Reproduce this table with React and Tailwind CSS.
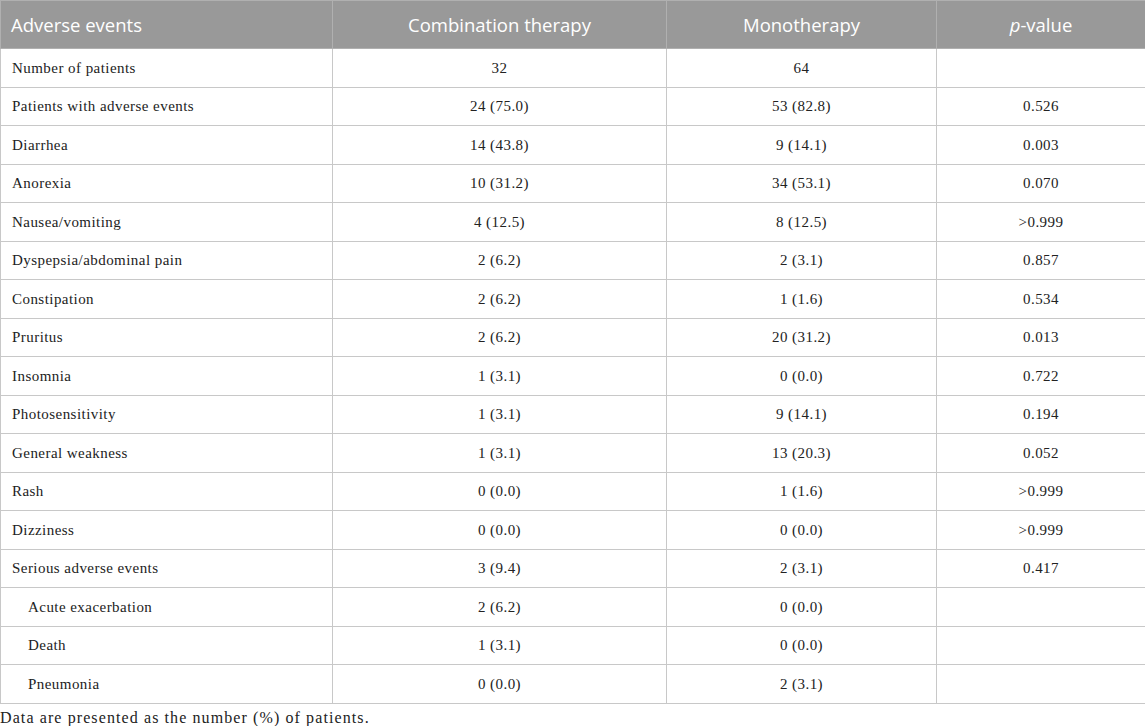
const rows = [
  ["Number of patients", "32", "64", ""],
  ["Patients with adverse events", "24 (75.0)", "53 (82.8)", "0.526"],
  ["Diarrhea", "14 (43.8)", "9 (14.1)", "0.003"],
  ["Anorexia", "10 (31.2)", "34 (53.1)", "0.070"],
  ["Nausea/vomiting", "4 (12.5)", "8 (12.5)", ">0.999"],
  ["Dyspepsia/abdominal pain", "2 (6.2)", "2 (3.1)", "0.857"],
  ["Constipation", "2 (6.2)", "1 (1.6)", "0.534"],
  ["Pruritus", "2 (6.2)", "20 (31.2)", "0.013"],
  ["Insomnia", "1 (3.1)", "0 (0.0)", "0.722"],
  ["Photosensitivity", "1 (3.1)", "9 (14.1)", "0.194"],
  ["General weakness", "1 (3.1)", "13 (20.3)", "0.052"],
  ["Rash", "0 (0.0)", "1 (1.6)", ">0.999"],
  ["Dizziness", "0 (0.0)", "0 (0.0)", ">0.999"],
  ["Serious adverse events", "3 (9.4)", "2 (3.1)", "0.417"],
  ["Acute exacerbation", "2 (6.2)", "0 (0.0)", "", true],
  ["Death", "1 (3.1)", "0 (0.0)", "", true],
  ["Pneumonia", "0 (0.0)", "2 (3.1)", "", true],
];

export default function App() {
  return (
    <div className="w-[1145px] h-[726px] bg-white overflow-hidden">
      <table className="w-[1145px] border-collapse table-fixed">
        <colgroup>
          <col className="w-[332px]" />
          <col className="w-[334px]" />
          <col className="w-[270px]" />
          <col className="w-[209px]" />
        </colgroup>
        <thead>
          <tr className="h-[48px] bg-[#999999] text-white text-[18.5px] font-['Open_Sans',sans-serif]">
            <th className="font-normal text-left pl-[10px] border border-[#b0b0b0]">Adverse events</th>
            <th className="font-normal text-center border border-[#b0b0b0]">Combination therapy</th>
            <th className="font-normal text-center border border-[#b0b0b0]">Monotherapy</th>
            <th className="font-normal text-center border border-[#b0b0b0]">
              <i>p</i>-value
            </th>
          </tr>
        </thead>
        <tbody className="font-['Liberation_Serif',serif] text-[15px] tracking-[0.45px] text-[#222]">
          {rows.map((r, i) => (
            <tr key={i} className="h-[38.5px]">
              <td className={`border border-[#c8c8c8] ${r[4] ? "pl-[27px]" : "pl-[11px]"}`}>{r[0]}</td>
              <td className="border border-[#c8c8c8] text-center">{r[1]}</td>
              <td className="border border-[#c8c8c8] text-center">{r[2]}</td>
              <td className="border border-[#c8c8c8] text-center">{r[3]}</td>
            </tr>
          ))}
        </tbody>
      </table>
      <p className="font-['Liberation_Serif',serif] text-[16px] tracking-[1.1px] text-[#222] mt-[4px] leading-[20px]">
        Data are presented as the number (%) of patients.
      </p>
    </div>
  );
}
